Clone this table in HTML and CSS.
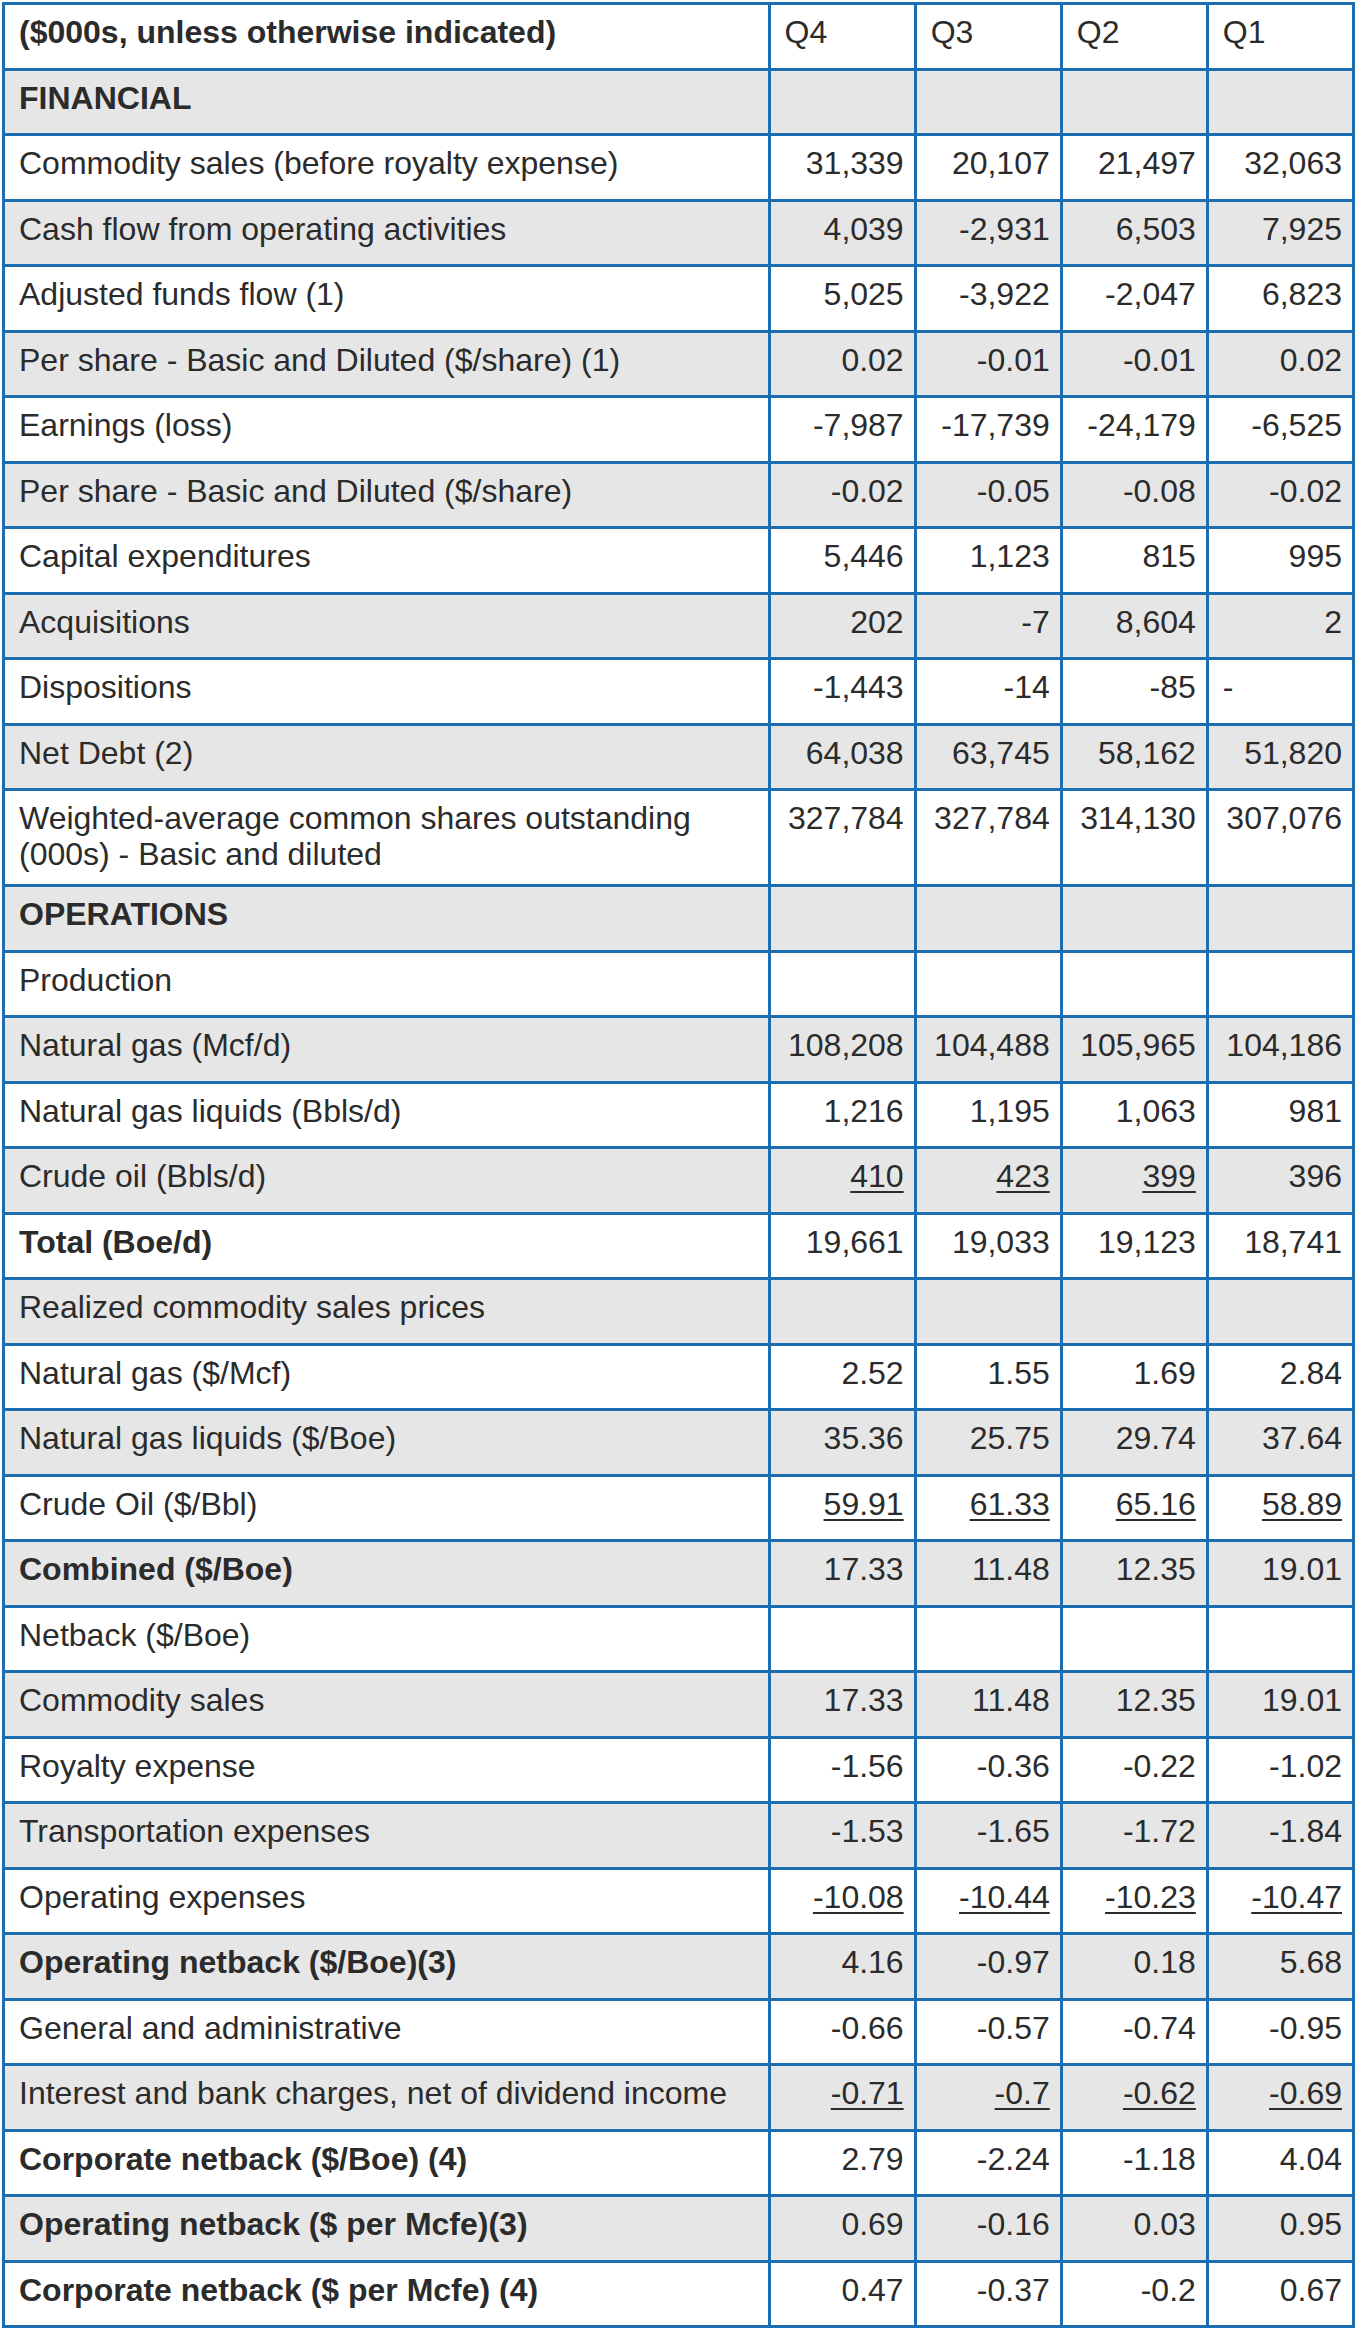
FILE: index.html
```html
<!DOCTYPE html>
<html lang="en">

<head>
    <meta charset="UTF-8" />
    <title>Quarterly Highlights</title>
    <link rel="stylesheet" href="styles.css">
</head>

<body>
    <table class="fin-table">
        <colgroup>
            <col class="label-col">
            <col class="q-col">
            <col class="q-col">
            <col class="q-col">
            <col class="q-col">
        </colgroup>
        <tbody>
            <tr class="head">
                <td class="b">($000s, unless otherwise indicated)</td>
                <td>Q4</td>
                <td>Q3</td>
                <td>Q2</td>
                <td>Q1</td>
            </tr>
            <tr>
                <td class="b">FINANCIAL</td>
                <td></td><td></td><td></td><td></td>
            </tr>
            <tr>
                <td>Commodity sales (before royalty expense)</td>
                <td class="num">31,339</td><td class="num">20,107</td><td class="num">21,497</td><td class="num">32,063</td>
            </tr>
            <tr>
                <td>Cash flow from operating activities</td>
                <td class="num">4,039</td><td class="num">-2,931</td><td class="num">6,503</td><td class="num">7,925</td>
            </tr>
            <tr>
                <td>Adjusted funds flow (1)</td>
                <td class="num">5,025</td><td class="num">-3,922</td><td class="num">-2,047</td><td class="num">6,823</td>
            </tr>
            <tr>
                <td>Per share - Basic and Diluted ($/share) (1)</td>
                <td class="num">0.02</td><td class="num">-0.01</td><td class="num">-0.01</td><td class="num">0.02</td>
            </tr>
            <tr>
                <td>Earnings (loss)</td>
                <td class="num">-7,987</td><td class="num">-17,739</td><td class="num">-24,179</td><td class="num">-6,525</td>
            </tr>
            <tr>
                <td>Per share - Basic and Diluted ($/share)</td>
                <td class="num">-0.02</td><td class="num">-0.05</td><td class="num">-0.08</td><td class="num">-0.02</td>
            </tr>
            <tr>
                <td>Capital expenditures</td>
                <td class="num">5,446</td><td class="num">1,123</td><td class="num">815</td><td class="num">995</td>
            </tr>
            <tr>
                <td>Acquisitions</td>
                <td class="num">202</td><td class="num">-7</td><td class="num">8,604</td><td class="num">2</td>
            </tr>
            <tr>
                <td>Dispositions</td>
                <td class="num">-1,443</td><td class="num">-14</td><td class="num">-85</td><td>-</td>
            </tr>
            <tr>
                <td>Net Debt (2)</td>
                <td class="num">64,038</td><td class="num">63,745</td><td class="num">58,162</td><td class="num">51,820</td>
            </tr>
            <tr class="tall">
                <td>Weighted-average common shares outstanding (000s) - Basic and diluted</td>
                <td class="num">327,784</td><td class="num">327,784</td><td class="num">314,130</td><td class="num">307,076</td>
            </tr>
            <tr>
                <td class="b">OPERATIONS</td>
                <td></td><td></td><td></td><td></td>
            </tr>
            <tr>
                <td>Production</td>
                <td></td><td></td><td></td><td></td>
            </tr>
            <tr>
                <td>Natural gas (Mcf/d)</td>
                <td class="num">108,208</td><td class="num">104,488</td><td class="num">105,965</td><td class="num">104,186</td>
            </tr>
            <tr>
                <td>Natural gas liquids (Bbls/d)</td>
                <td class="num">1,216</td><td class="num">1,195</td><td class="num">1,063</td><td class="num">981</td>
            </tr>
            <tr>
                <td>Crude oil (Bbls/d)</td>
                <td class="num"><u>410</u></td><td class="num"><u>423</u></td><td class="num"><u>399</u></td><td class="num">396</td>
            </tr>
            <tr>
                <td class="b">Total (Boe/d)</td>
                <td class="num">19,661</td><td class="num">19,033</td><td class="num">19,123</td><td class="num">18,741</td>
            </tr>
            <tr>
                <td>Realized commodity sales prices</td>
                <td></td><td></td><td></td><td></td>
            </tr>
            <tr>
                <td>Natural gas ($/Mcf)</td>
                <td class="num">2.52</td><td class="num">1.55</td><td class="num">1.69</td><td class="num">2.84</td>
            </tr>
            <tr>
                <td>Natural gas liquids ($/Boe)</td>
                <td class="num">35.36</td><td class="num">25.75</td><td class="num">29.74</td><td class="num">37.64</td>
            </tr>
            <tr>
                <td>Crude Oil ($/Bbl)</td>
                <td class="num"><u>59.91</u></td><td class="num"><u>61.33</u></td><td class="num"><u>65.16</u></td><td class="num"><u>58.89</u></td>
            </tr>
            <tr>
                <td class="b">Combined ($/Boe)</td>
                <td class="num">17.33</td><td class="num">11.48</td><td class="num">12.35</td><td class="num">19.01</td>
            </tr>
            <tr>
                <td>Netback ($/Boe)</td>
                <td></td><td></td><td></td><td></td>
            </tr>
            <tr>
                <td>Commodity sales</td>
                <td class="num">17.33</td><td class="num">11.48</td><td class="num">12.35</td><td class="num">19.01</td>
            </tr>
            <tr>
                <td>Royalty expense</td>
                <td class="num">-1.56</td><td class="num">-0.36</td><td class="num">-0.22</td><td class="num">-1.02</td>
            </tr>
            <tr>
                <td>Transportation expenses</td>
                <td class="num">-1.53</td><td class="num">-1.65</td><td class="num">-1.72</td><td class="num">-1.84</td>
            </tr>
            <tr>
                <td>Operating expenses</td>
                <td class="num"><u>-10.08</u></td><td class="num"><u>-10.44</u></td><td class="num"><u>-10.23</u></td><td class="num"><u>-10.47</u></td>
            </tr>
            <tr>
                <td class="b">Operating netback ($/Boe)(3)</td>
                <td class="num">4.16</td><td class="num">-0.97</td><td class="num">0.18</td><td class="num">5.68</td>
            </tr>
            <tr>
                <td>General and administrative</td>
                <td class="num">-0.66</td><td class="num">-0.57</td><td class="num">-0.74</td><td class="num">-0.95</td>
            </tr>
            <tr>
                <td>Interest and bank charges, net of dividend income</td>
                <td class="num"><u>-0.71</u></td><td class="num"><u>-0.7</u></td><td class="num"><u>-0.62</u></td><td class="num"><u>-0.69</u></td>
            </tr>
            <tr>
                <td class="b">Corporate netback ($/Boe) (4)</td>
                <td class="num">2.79</td><td class="num">-2.24</td><td class="num">-1.18</td><td class="num">4.04</td>
            </tr>
            <tr>
                <td class="b">Operating netback ($ per Mcfe)(3)</td>
                <td class="num">0.69</td><td class="num">-0.16</td><td class="num">0.03</td><td class="num">0.95</td>
            </tr>
            <tr>
                <td class="b">Corporate netback ($ per Mcfe) (4)</td>
                <td class="num">0.47</td><td class="num">-0.37</td><td class="num">-0.2</td><td class="num">0.67</td>
            </tr>
        </tbody>
    </table>
</body>

</html>
```

FILE: styles.css
```css
body {
    margin: 0;
    padding: 2px;
    background: #fff;
    font-family: "Liberation Sans", Arial, sans-serif;
    color: #2b2b2b;
}

.fin-table {
    border-collapse: collapse;
    table-layout: fixed;
    width: 1353px;
    font-size: 32px;
}

.label-col {
    width: 765px;
}

.q-col {
    width: 146px;
}

.fin-table td {
    border: 3px solid #1d6db2;
    height: 65.5px;
    padding: 9px 10px 0 14px;
    vertical-align: top;
    line-height: 36px;
    box-sizing: border-box;
}

.fin-table tr:nth-child(even) td {
    background-color: #e6e6e6;
}

.fin-table .tall td {
    height: 96px;
}

.fin-table td.num {
    text-align: right;
    padding-right: 10px;
}

.fin-table td.b {
    font-weight: bold;
}

.fin-table u {
    text-decoration-thickness: 2px;
    text-underline-offset: 4px;
}
```
